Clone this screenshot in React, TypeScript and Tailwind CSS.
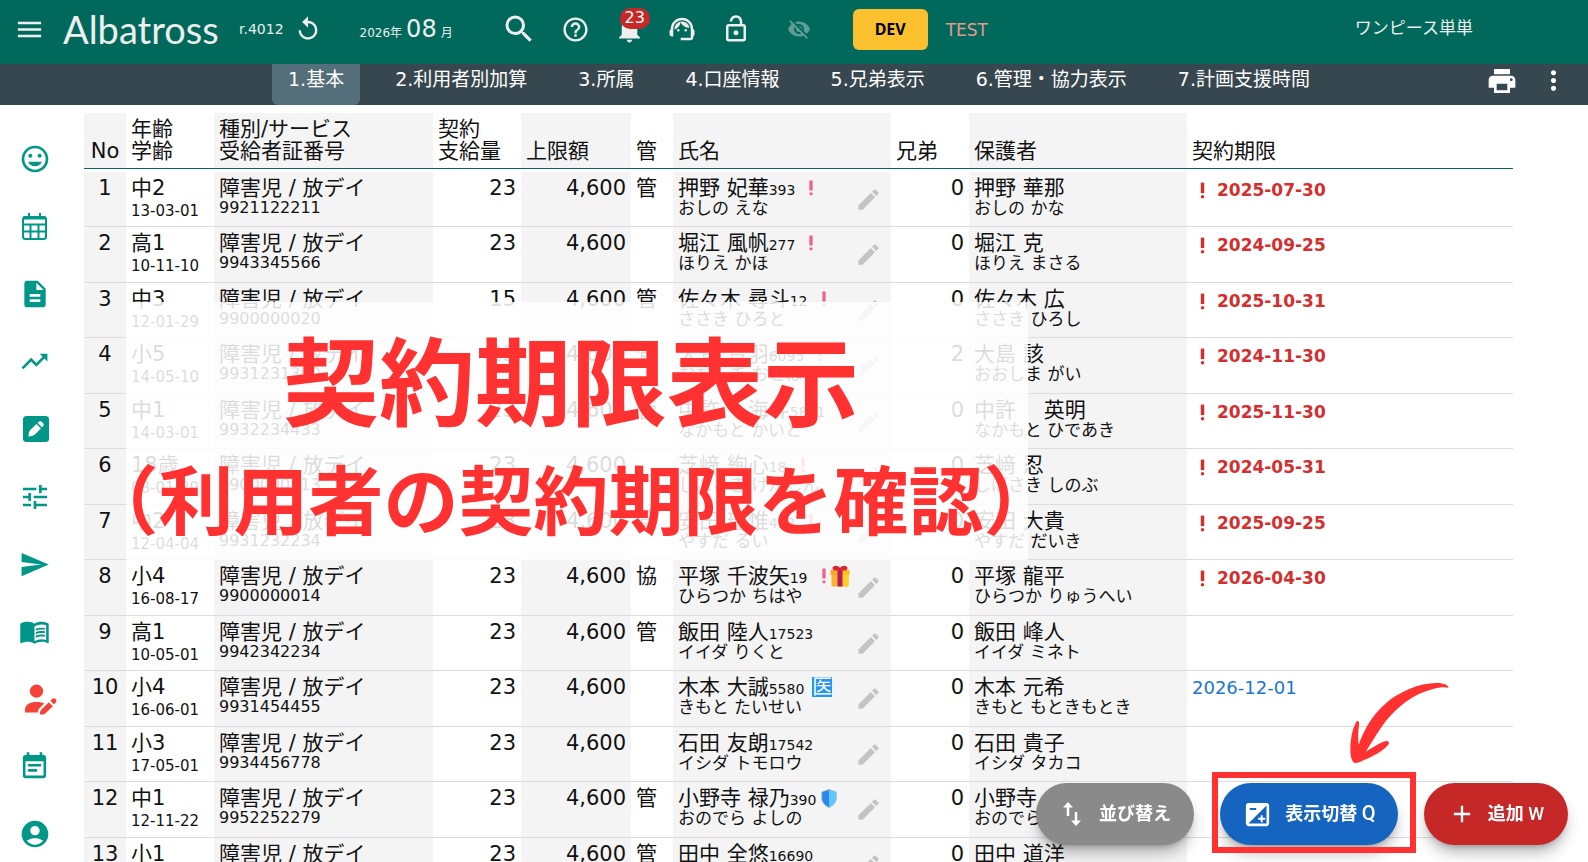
import type { ReactNode } from "react";
import {
  MdAccountCircle,
  MdAdd,
  MdDescription,
  MdEdit,
  MdEventNote,
  MdExposure,
  MdHelpOutline,
  MdMenu,
  MdMenuBook,
  MdMoreVert,
  MdNotifications,
  MdOutlineLockOpen,
  MdOutlineMood,
  MdPrint,
  MdPriorityHigh,
  MdReplay,
  MdSearch,
  MdSend,
  MdSupportAgent,
  MdTrendingUp,
  MdTune,
  MdVisibilityOff,
} from "react-icons/md";

type Mark = "alert" | "gift" | "medical" | "shield";

type Row = {
  age: string;
  birth: string;
  cert: string;
  amount: number;
  role?: string;
  name: string;
  id: string;
  kana: string;
  marks?: Mark[];
  siblings: number;
  parent: string;
  parentKana: string;
  limit?: string;
  expired?: boolean;
};

const rows: Row[] = [
  { age: "中2", birth: "13-03-01", cert: "9921122211", amount: 23, role: "管", name: "押野 妃華", id: "393", kana: "おしの えな", marks: ["alert"], siblings: 0, parent: "押野 華那", parentKana: "おしの かな", limit: "2025-07-30", expired: true },
  { age: "高1", birth: "10-11-10", cert: "9943345566", amount: 23, name: "堀江 風帆", id: "277", kana: "ほりえ かほ", marks: ["alert"], siblings: 0, parent: "堀江 克", parentKana: "ほりえ まさる", limit: "2024-09-25", expired: true },
  { age: "中3", birth: "12-01-29", cert: "9900000020", amount: 15, role: "管", name: "佐々木 尋斗", id: "12", kana: "ささき ひろと", marks: ["alert"], siblings: 0, parent: "佐々木 広", parentKana: "ささき ひろし", limit: "2025-10-31", expired: true },
  { age: "小5", birth: "14-05-10", cert: "9931231300", amount: 23, role: "管", name: "大島 音羽", id: "6095", kana: "おおしま おとは", marks: ["alert"], siblings: 2, parent: "大島 該", parentKana: "おおしま がい", limit: "2024-11-30", expired: true },
  { age: "中1", birth: "14-03-01", cert: "9932234433", amount: 23, role: "管", name: "中許　 海斗", id: "5841", kana: "なかもと かいと", siblings: 0, parent: "中許　 英明", parentKana: "なかもと ひであき", limit: "2025-11-30", expired: true },
  { age: "18歳", birth: "08-01-29", cert: "9900000013", amount: 23, name: "芝﨑 絢心", id: "18", kana: "しばさき けんしん", marks: ["alert"], siblings: 0, parent: "芝﨑 忍", parentKana: "しばさき しのぶ", limit: "2024-05-31", expired: true },
  { age: "中2", birth: "12-04-04", cert: "9931232234", amount: 23, role: "管", name: "安田 瑠惟", id: "413", kana: "やすだ るい", marks: ["alert"], siblings: 0, parent: "安田 大貴", parentKana: "やすだ だいき", limit: "2025-09-25", expired: true },
  { age: "小4", birth: "16-08-17", cert: "9900000014", amount: 23, role: "協", name: "平塚 千波矢", id: "19", kana: "ひらつか ちはや", marks: ["alert", "gift"], siblings: 0, parent: "平塚 龍平", parentKana: "ひらつか りゅうへい", limit: "2026-04-30", expired: true },
  { age: "高1", birth: "10-05-01", cert: "9942342234", amount: 23, role: "管", name: "飯田 陸人", id: "17523", kana: "イイダ りくと", siblings: 0, parent: "飯田 峰人", parentKana: "イイダ ミネト" },
  { age: "小4", birth: "16-06-01", cert: "9931454455", amount: 23, name: "木本 大誠", id: "5580", kana: "きもと たいせい", marks: ["medical"], siblings: 0, parent: "木本 元希", parentKana: "きもと もときもとき", limit: "2026-12-01" },
  { age: "小3", birth: "17-05-01", cert: "9934456778", amount: 23, name: "石田 友朗", id: "17542", kana: "イシダ トモロウ", siblings: 0, parent: "石田 貴子", parentKana: "イシダ タカコ" },
  { age: "中1", birth: "12-11-22", cert: "9952252279", amount: 23, role: "管", name: "小野寺 禄乃", id: "390", kana: "おのでら よしの", marks: ["shield"], siblings: 0, parent: "小野寺", parentKana: "おのでら" },
  { age: "小1", birth: "19-04-20", cert: "9900000031", amount: 23, role: "管", name: "田中 全悠", id: "16690", kana: "たなか ぜんゆう", siblings: 0, parent: "田中 道洋", parentKana: "たなか みちひろ" },
];

const tabs = ["1.基本", "2.利用者別加算", "3.所属", "4.口座情報", "5.兄弟表示", "6.管理・協力表示", "7.計画支援時間"];

function CalendarGrid() {
  return (
    <svg className="ml-0.5" width="27" height="29" viewBox="0 0 27 29" fill="none" stroke="currentColor" strokeWidth="2" aria-hidden="true">
      <rect x="2" y="5" width="23" height="22" rx="2.5" />
      <path d="M2 6h23" strokeWidth="3" />
      <path d="M8 1v4M19 1v4M2 12.5h23M2 19.5h23M9.5 12.5V27M17.5 12.5V27" />
    </svg>
  );
}

function PencilSquare() {
  return (
    <svg className="ml-1" width="26" height="26" viewBox="0 0 26 26" aria-hidden="true">
      <rect width="26" height="26" rx="3.5" fill="currentColor" />
      <path d="M5.500 20.500c0-3.500.7-5.500 2.200-7L13.500 8l4.400 4.400-5.500 5.700c-1.500 1.600-3.500 2.400-6.900 2.400z" fill="#fff" />
      <path d="M14.700 6.900l.8-.8c1-1 2.600-1 3.600 0l.8.8c1 1 1 2.500 0 3.500l-.9.9z" fill="#fff" />
    </svg>
  );
}

function UserPencil() {
  return (
    <svg className="ml-1.5" width="32" height="31" viewBox="0 0 32 31" fill="currentColor" aria-hidden="true">
      <circle cx="11.5" cy="7.2" r="6.6" />
      <path d="M0 28.500V26c0-5.500 5-8 11.500-8 3 0 5.500.4 7.700 1.500L14 24.800c-.6.700-.9 1.500-1 2.400l-.1 1.300z" />
      <path d="M15 30.500c0-2.600.2-3.600 1.200-4.700l7.600-7.600 4.100 4.100-7.700 7.300c-1 .9-2.400 1-5.200.9z" />
      <path d="M25.300 16.800l1.700-1.700c1.100-1.100 2.600-1.100 3.600-.1s1.100 2.700 0 3.800l-1.500 1.800z" />
    </svg>
  );
}

function Gift() {
  return (
    <svg className="-ml-1" width="20" height="22" viewBox="0 0 20 22" aria-label="誕生日">
      <path d="M1.500 9h17v11.500q0 1-1 1h-15q-1 0-1-1z" fill="#f9b233" />
      <path d="M12 9h6.500v11.500q0 1-1 1H12z" fill="#fdd022" />
      <rect x="0.500" y="5" width="19" height="5" rx="1" fill="#f7a928" />
      <path d="M12 5h6.500q1 0 1 1v3q0 1-1 1H12z" fill="#fcc21b" />
      <path d="M7.500 5h5v16.500h-5z" fill="#b71c5a" />
      <path d="M10 5C7 6 3 6 2.500 3.500 2.500 0 8 0 10 3c2-3 7.500-3 7.500.5C17 6 13 6 10 5z" fill="#dc2638" />
    </svg>
  );
}

function Shield() {
  return (
    <svg className="ml-px" width="16" height="19" viewBox="0 0 16 19" aria-label="受給者証">
      <path d="M8 .5 15.200 3v6c0 4.500-3 7.500-7.200 9.500C3.800 16.500.8 13.500.8 9V3z" fill="#5bc8ff" stroke="#9fb4c4" />
      <path d="M8 1v17C4 16 1.300 13.200 1.300 9V3.300z" fill="#2f86ea" />
    </svg>
  );
}

function NameMark({ kind }: { kind: Mark }) {
  if (kind === "gift") return <Gift />;
  if (kind === "shield") return <Shield />;
  if (kind === "medical") return <span className="ml-1 bg-[#2196f3] text-center text-xl leading-5 text-white">医</span>;
  return <MdPriorityHigh size={20} className="-mr-1 ml-0.5 text-[#f06292]" />;
}

const sideItems: { label: string; icon: ReactNode; active?: boolean }[] = [
  { label: "ホーム", icon: <MdOutlineMood size={32} /> },
  { label: "カレンダー", icon: <CalendarGrid /> },
  { label: "書類", icon: <MdDescription size={32} /> },
  { label: "推移", icon: <MdTrendingUp size={31} /> },
  { label: "記録", icon: <PencilSquare /> },
  { label: "調整", icon: <MdTune size={32} /> },
  { label: "送信", icon: <MdSend size={31} /> },
  { label: "帳票", icon: <MdMenuBook size={31} /> },
  { label: "利用者", icon: <UserPencil />, active: true },
  { label: "予定", icon: <MdEventNote size={31} /> },
  { label: "アカウント", icon: <MdAccountCircle size={32} /> },
];

function TopBar() {
  return (
    <header className="flex h-16 shrink-0 items-center bg-[#00695c] pb-1.5 pl-3.5 pr-[115px] text-[#eeeeee]">
      <button type="button" aria-label="メニュー" className="mr-4.5">
        <MdMenu size={31} />
      </button>
      <a href="#top" className="w-[156px] font-[Lato] text-[38px] leading-10">
        Albatross
      </a>
      <span className="ml-5 text-sm">r.4012</span>
      <button type="button" aria-label="更新" className="ml-2.5">
        <MdReplay size={28} />
      </button>
      <p className="ml-9.5 flex items-baseline gap-1 whitespace-nowrap text-xs">
        2026年<span className="text-2xl leading-6">08</span>月
      </p>
      <div className="ml-12 flex items-center">
        <button type="button" aria-label="検索">
          <MdSearch size={36} />
        </button>
        <button type="button" aria-label="ヘルプ" className="ml-6">
          <MdHelpOutline size={29} />
        </button>
        <button type="button" aria-label="お知らせ" className="relative ml-6">
          <MdNotifications size={31} />
          <span className="absolute -top-1.5 left-1.5 h-[21px] w-[30px] rounded-full bg-[#c62828] text-center text-base leading-5 text-white">
            23
          </span>
        </button>
        <button type="button" aria-label="サポート" className="ml-5.5">
          <MdSupportAgent size={30} />
        </button>
        <button type="button" aria-label="ロック" className="ml-6">
          <MdOutlineLockOpen size={30} />
        </button>
        <button type="button" aria-label="非表示" className="ml-9 opacity-40">
          <MdVisibilityOff size={24} />
        </button>
      </div>
      <button
        type="button"
        className="ml-[42px] h-[41px] w-[75px] shrink-0 rounded-md bg-[#fbc02d] font-['Noto_Sans'] text-base font-bold text-black"
      >
        DEV
      </button>
      <span className="ml-4.5 pt-1 text-[17px] text-[#e59a8f]">TEST</span>
      <span className="ml-auto whitespace-nowrap text-[17px]">ワンピース単単</span>
    </header>
  );
}

function TabBar() {
  return (
    <nav className="flex h-[41px] shrink-0 bg-[#37474f] pl-[272px] pr-[19px] text-white">
      <ul className="flex gap-[19px]">
        {tabs.map((tab, i) => (
          <li key={tab}>
            <a
              href={`#tab${i + 1}`}
              className={`block h-full whitespace-nowrap rounded-b-md px-4 pt-[3px] text-[19px] leading-6 ${
                i === 0 ? "bg-[#546e7a]" : ""
              }`}
            >
              {tab}
            </a>
          </li>
        ))}
      </ul>
      <div className="ml-auto flex items-center gap-5 pb-2">
        <button type="button" aria-label="印刷">
          <MdPrint size={32} />
        </button>
        <button type="button" aria-label="その他">
          <MdMoreVert size={31} />
        </button>
      </div>
    </nav>
  );
}

function SideNav() {
  return (
    <nav className="w-[84px] shrink-0 pl-[19px] pt-5 text-[#009688]">
      {sideItems.map((item) => (
        <a
          key={item.label}
          href="#side"
          aria-label={item.label}
          className={`flex w-10 items-center odd:h-17 even:h-[67px] ${item.active ? "text-[#f44336]" : ""}`}
        >
          {item.icon}
        </a>
      ))}
    </nav>
  );
}

function UserTable() {
  return (
    <table className="w-full table-fixed border-separate border-spacing-0 whitespace-nowrap text-[21px] leading-[22px] text-[#111]">
      <colgroup>
        <col className="w-[42px]" />
        <col className="w-[88px]" />
        <col className="w-[219px]" />
        <col className="w-[88px]" />
        <col className="w-[110px]" />
        <col className="w-[42px]" />
        <col className="w-[218px]" />
        <col className="w-[78px]" />
        <col className="w-[218px]" />
        <col />
      </colgroup>
      <thead>
        <tr className="h-14 text-left *:border-b *:border-[#00695c] *:px-[5px] *:pb-1.5 *:align-bottom *:font-normal *:odd:bg-[#f4f4f4]">
          <th className="text-center">No</th>
          <th>
            年齢
            <br />
            学齢
          </th>
          <th>
            種別/サービス
            <br />
            受給者証番号
          </th>
          <th>
            契約
            <br />
            支給量
          </th>
          <th>上限額</th>
          <th>管</th>
          <th>氏名</th>
          <th>兄弟</th>
          <th>保護者</th>
          <th>契約期限</th>
        </tr>
      </thead>
      <tbody className="before:block before:h-[3px] before:content-['']">
        {rows.map((row, i) => (
          <tr
            key={row.cert}
            className="odd:h-[55px] even:h-14 *:border-b *:border-[#dcdcdc] *:px-[5px] *:pt-[5px] *:align-top *:odd:bg-[#f4f4f4]"
          >
            <td className="text-center">{i + 1}</td>
            <td>
              {row.age}
              <div className="text-[15px] leading-6">{row.birth}</div>
            </td>
            <td>
              障害児 / 放デイ
              <div className="text-base leading-[18px]">{row.cert}</div>
            </td>
            <td className="text-right">{row.amount}</td>
            <td className="text-right">4,600</td>
            <td>{row.role}</td>
            <td>
              <div className="flex items-start justify-between pr-1">
                <div>
                  <div className="flex h-[22px] items-center gap-1">
                    <span>
                      {row.name}
                      <span className="text-sm leading-none">{row.id}</span>
                    </span>
                    {row.marks?.map((mark) => (
                      <NameMark key={mark} kind={mark} />
                    ))}
                  </div>
                  <div className="text-[17px] leading-[18px]">{row.kana}</div>
                </div>
                <button type="button" aria-label={`${row.name}を編集`} className="pt-[9px] text-[#c4c4c4]">
                  <MdEdit size={27} />
                </button>
              </div>
            </td>
            <td className="text-right">{row.siblings}</td>
            <td>
              {row.parent}
              <div className="text-[17px] leading-[18px]">{row.parentKana}</div>
            </td>
            <td>
              {row.expired ? (
                <div className="flex h-[26px] items-center gap-1 text-[17px] font-bold text-[#d32f2f]">
                  <MdPriorityHigh size={21} />
                  {row.limit}
                </div>
              ) : (
                <span className="text-lg leading-6 text-[#1976d2]">{row.limit}</span>
              )}
            </td>
          </tr>
        ))}
      </tbody>
    </table>
  );
}

function Callout() {
  return (
    <div className="absolute left-[42px] top-[197px] flex h-[258px] w-[902px] flex-col items-center whitespace-nowrap bg-white/85 pr-3 pt-[15px] font-['Noto_Sans_CJK_JP',sans-serif] font-bold text-[#ff3131]">
      <p className="text-[96px] leading-[120px]">契約期限表示</p>
      <p className="text-[75px] leading-[120px]">（利用者の契約期限を確認）</p>
    </div>
  );
}

function SortArrows() {
  return (
    <svg width="18" height="24" viewBox="0 0 18 24" fill="none" stroke="currentColor" strokeWidth="2.500" aria-hidden="true">
      <path d="M5 14V4M13 10v10" />
      <path d="M0 5.500 5 0l5 5.500zM8 18.500l5 5.500 5-5.500z" fill="currentColor" stroke="none" />
    </svg>
  );
}

function RedArrow() {
  return (
    <svg className="absolute -top-[100px] left-[130px]" width="100" height="81" viewBox="0 0 100 81" aria-hidden="true">
      <path
        fill="#ff3131"
        d="M98.500 4.700C98 1.500 93 0 86.600 0 77 .3 69 2 61.200 5.300 51 9.500 43 14 35.900 20.300 28.500 27 22.500 34 17.700 42 14 48.500 11 55 8.700 62 7.800 54 8.200 47 9.200 41 9.500 37.500 6.800 37 5.800 39.700 3.500 44 2.200 49 1.400 53.700.5 59 .2 64 .4 68.700.6 72 .8 73.500 1.400 75.300 2.300 78.500 4 80.500 6.200 80 9 79.600 11.500 78.300 14.100 77 19 75 24 72.500 28.600 69.700 32.500 67.300 37 64 38.800 61 39.300 58.500 38 57.500 35.900 58 33.300 58.600 31 59.600 28.600 61 24 63.500 20 66 16 68.700 18 65 20.500 61 23.200 57 28 49 33 41 39.500 33.700 46 26.500 53 20.500 61.200 15.300 68 11 75.500 8 83 6 87 4.900 90.500 4.300 93.800 4.300z"
      />
    </svg>
  );
}

function ActionButtons() {
  return (
    <div className="fixed bottom-[17px] right-5 flex gap-6.5 font-[Roboto,'Noto_Sans_CJK_JP',sans-serif] text-lg font-bold text-white *:h-[62px]">
      <button
        type="button"
        className="flex w-[158px] items-center justify-center gap-4.5 rounded-full bg-[#8a8a8a] pl-1 shadow-lg shadow-black/30"
      >
        <SortArrows />
        並び替え
      </button>
      <div className="relative">
        <button
          type="button"
          className="flex h-full w-[178px] items-center justify-center gap-3 rounded-full bg-[#1565c0] shadow-lg shadow-black/30"
        >
          <MdExposure size={31} />
          <span>
            表示切替 <span className="text-xl leading-6 font-medium">Q</span>
          </span>
        </button>
        <div className="pointer-events-none absolute -bottom-2 -left-2 -right-[18px] -top-[11px] border-6 border-[#ff3131]" />
        <RedArrow />
      </div>
      <button
        type="button"
        className="flex w-36 items-center justify-center gap-3 rounded-full bg-[#c62828] shadow-lg shadow-black/30"
      >
        <MdAdd size={28} />
        <span>
          追加 <span className="text-lg font-medium">W</span>
        </span>
      </button>
    </div>
  );
}

export default function App() {
  return (
    <div className="flex h-screen flex-col overflow-hidden bg-white font-['DejaVu_Sans','Noto_Sans_CJK_JP',sans-serif]">
      <TopBar />
      <TabBar />
      <div className="flex min-h-0 flex-1">
        <SideNav />
        <main className="relative min-w-0 flex-1 overflow-hidden pr-[75px] pt-2">
          <UserTable />
          <Callout />
        </main>
      </div>
      <ActionButtons />
    </div>
  );
}
